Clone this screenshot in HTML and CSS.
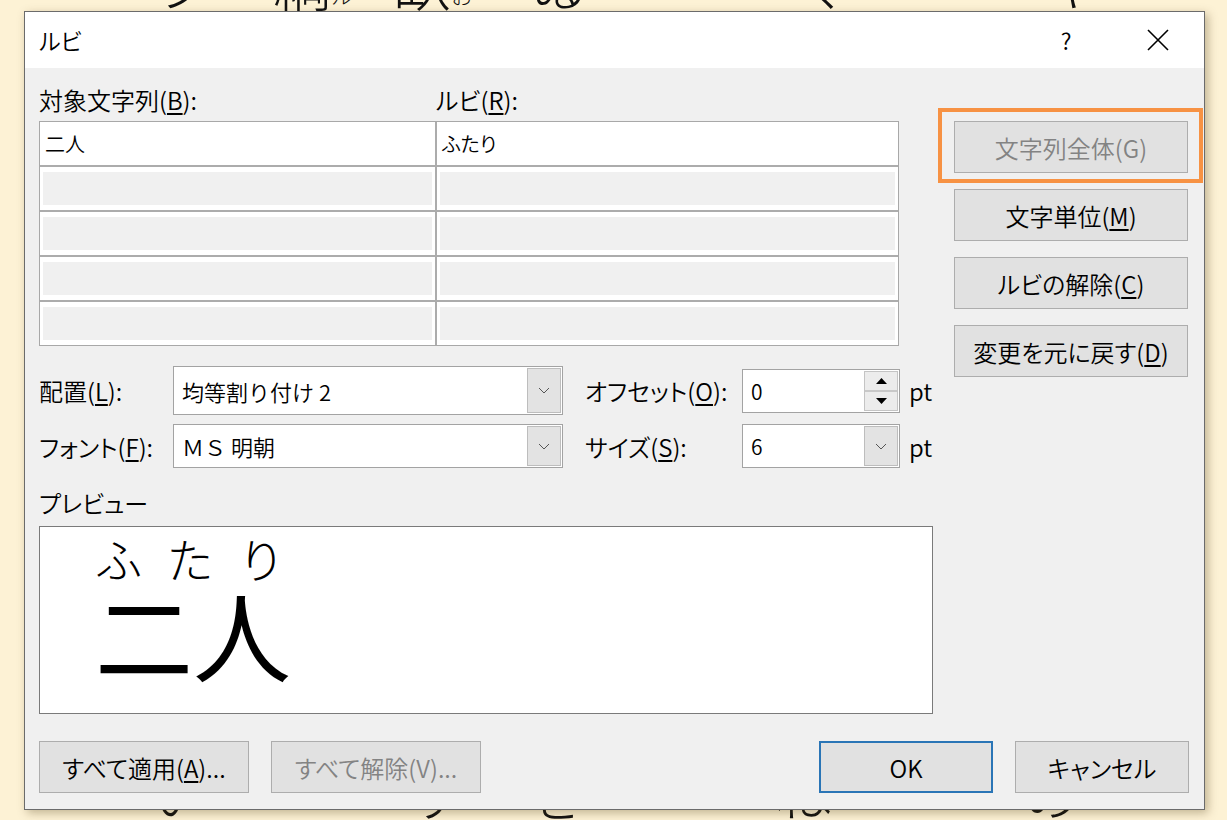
FILE: index.html
```html
<!DOCTYPE html>
<html lang="ja">
<head>
<meta charset="utf-8">
<title>ルビ</title>
<link rel="stylesheet" href="styles.css">
</head>
<body>
<div class="doc">
  <div class="doc-line doc-top">
    <span class="g g1">ラ</span><span class="g g2">綱<small>ル</small></span><span class="g g3">臥<small>お</small></span><span class="g g4">ゐ</span><span class="g g5">ヽ</span><span class="g g6">く</span><span class="g g7">キ</span>
  </div>
  <div class="doc-line doc-bottom">
    <span class="g b1">い</span><span class="g b2">す</span><span class="g b3">を</span><span class="g b4">ね</span><span class="g b5">の</span>
  </div>
</div>

<div class="dialog">
  <div class="titlebar">
    <span class="title">ルビ</span>
    <span class="tb-btn help">?</span>
    <span class="tb-btn close"><svg width="22" height="22" viewBox="0 0 22 22"><path d="M1 1L21 21M21 1L1 21" stroke="#000" stroke-width="1.6" fill="none"/></svg></span>
  </div>
  <div class="body">
    <div class="main">
      <div class="left">
        <div class="col-labels">
          <span class="lbl-target">対象文字列(<u>B</u>):</span>
          <span class="lbl-ruby">ルビ(<u>R</u>):</span>
        </div>
        <div class="grid">
          <div class="cell filled">二人</div>
          <div class="cell filled">ふたり</div>
          <div class="cell empty"><div class="inner"></div></div>
          <div class="cell empty"><div class="inner"></div></div>
          <div class="cell empty"><div class="inner"></div></div>
          <div class="cell empty"><div class="inner"></div></div>
          <div class="cell empty"><div class="inner"></div></div>
          <div class="cell empty"><div class="inner"></div></div>
          <div class="cell empty"><div class="inner"></div></div>
          <div class="cell empty"><div class="inner"></div></div>
        </div>

        <div class="opt-row row1">
          <span class="opt-label">配置(<u>L</u>):</span>
          <div class="combo wide">
            <span class="val">均等割り付け 2</span>
            <span class="drop"><svg width="12" height="7" viewBox="0 0 12 7"><path d="M1 1L6 6L11 1" stroke="#555" stroke-width="1" fill="none"/></svg></span>
          </div>
          <span class="opt-label2">オフセット(<u>O</u>):</span>
          <div class="spin">
            <span class="val">0</span>
            <span class="spin-btns">
              <span class="sb up"><svg width="11" height="6" viewBox="0 0 11 6"><path d="M0 6L5.5 0L11 6Z" fill="#000"/></svg></span>
              <span class="sb down"><svg width="11" height="6" viewBox="0 0 11 6"><path d="M0 0L5.5 6L11 0Z" fill="#000"/></svg></span>
            </span>
          </div>
          <span class="unit">pt</span>
        </div>

        <div class="opt-row row2">
          <span class="opt-label">フォント(<u>F</u>):</span>
          <div class="combo wide">
            <span class="val">ＭＳ 明朝</span>
            <span class="drop"><svg width="12" height="7" viewBox="0 0 12 7"><path d="M1 1L6 6L11 1" stroke="#555" stroke-width="1" fill="none"/></svg></span>
          </div>
          <span class="opt-label2">サイズ(<u>S</u>):</span>
          <div class="combo narrow">
            <span class="val">6</span>
            <span class="drop"><svg width="12" height="7" viewBox="0 0 12 7"><path d="M1 1L6 6L11 1" stroke="#555" stroke-width="1" fill="none"/></svg></span>
          </div>
          <span class="unit">pt</span>
        </div>

        <div class="preview-label">プレビュー</div>
        <div class="preview">
          <div class="pv-word">
            <div class="pv-ruby"><span>ふ</span><span>た</span><span>り</span></div>
            <div class="pv-base">二人</div>
          </div>
        </div>
      </div>

      <div class="right">
        <div class="btn-wrap">
          <button class="btn disabled">文字列全体(G)</button>
          <span class="focus-ring"></span>
        </div>
        <button class="btn">文字単位(<u>M</u>)</button>
        <button class="btn">ルビの解除(<u>C</u>)</button>
        <button class="btn">変更を元に戻す(<u>D</u>)</button>
      </div>
    </div>

    <div class="bottom">
      <button class="btn b-apply">すべて適用(<u>A</u>)...</button>
      <button class="btn b-clear disabled">すべて解除(V)...</button>
      <span class="spacer"></span>
      <button class="btn b-ok">OK</button>
      <button class="btn b-cancel">キャンセル</button>
    </div>
  </div>
</div>
</body>
</html>
```

FILE: styles.css
```css
* { box-sizing: border-box; }

html, body {
  margin: 0;
  padding: 0;
  width: 1227px;
  height: 820px;
  overflow: hidden;
}

body {
  background: #fdf2d5;
  font-family: "Noto Sans CJK JP", "Noto Sans", sans-serif;
  color: #000;
  position: relative;
}

/* document behind the dialog */
.doc {
  position: relative;
  width: 1227px;
  height: 820px;
}

.doc-line {
  display: flex;
  font-family: "Noto Sans CJK JP", serif;
  font-weight: 300;
  font-size: 58px;
  line-height: 58px;
  height: 58px;
  color: #111;
}

.doc-top { margin-top: -48px; }
.doc-bottom { margin-top: 752px; }

.g small { font-size: 22px; vertical-align: 2px; }

.g1 { margin-left: 150px; }
.g2 { margin-left: 65px; }
.g3 { margin-left: 40px; }
.g4 { margin-left: 58px; }
.g5 { margin-left: 70px; }
.g6 { margin-left: 75px; }
.g7 { margin-left: 190px; }

.b1 { margin-left: 150px; }
.b2 { margin-left: 200px; }
.b3 { margin-left: 60px; }
.b4 { margin-left: 190px; }
.b5 { margin-left: 190px; }

/* dialog */
.dialog {
  position: absolute;
  left: 24px;
  top: 11px;
  width: 1181px;
  height: 799px;
  border: 1px solid #6b6b6b;
  background: #f0f0f0;
  box-shadow: 3px 3px 9px rgba(80, 60, 20, 0.35);
  display: flex;
  flex-direction: column;
  font-size: 24px;
  font-weight: 350;
  font-feature-settings: "palt" 1;
}

.titlebar {
  height: 56px;
  background: #fff;
  display: flex;
  align-items: center;
  flex: none;
}

.title {
  padding-left: 14px;
  font-size: 23px;
  flex: 1;
}

.tb-btn {
  width: 92px;
  height: 56px;
  display: flex;
  align-items: center;
  justify-content: center;
}

.help { font-size: 23px; }

.body {
  flex: 1;
  display: flex;
  flex-direction: column;
  padding: 0 15px 0 14px;
}

.main {
  display: flex;
  gap: 21px;
}

.left {
  width: 894px;
  display: flex;
  flex-direction: column;
}

.col-labels {
  margin-top: 17px;
  height: 30px;
  display: flex;
  align-items: center;
  line-height: 30px;
}

.lbl-target { width: 397px; }

u { text-decoration-thickness: 2px; text-underline-offset: 3px; }

.grid {
  margin-top: 6px;
  width: 860px;
  display: grid;
  grid-template-columns: 395px 461px;
  grid-auto-rows: 43px;
  gap: 2px;
  border: 1px solid #a8a8a8;
  background: #acacac;
}

.cell {
  background: #fff;
}

.cell.filled {
  font-size: 20px;
  display: flex;
  align-items: center;
  padding-left: 5px;
}

.cell.empty {
  padding: 5px 3px 5px 3px;
}

.cell .inner {
  width: 100%;
  height: 100%;
  background: #f0f0f0;
}

.opt-row {
  display: flex;
  align-items: center;
}

.row1 { margin-top: 20px; height: 49px; }
.row2 { margin-top: 9px; height: 44px; }

.opt-label { width: 134px; }
.opt-label2 { width: 157px; margin-left: 22px; }

.combo, .spin {
  height: 100%;
  border: 1px solid #a3a3a3;
  background: #fff;
  display: flex;
  align-items: center;
}

.combo.wide { width: 390px; }
.combo.narrow { width: 158px; height: 44px; }
.spin { width: 158px; height: 44px; }

.val {
  flex: 1;
  padding-left: 8px;
  font-size: 21px;
}

.combo.wide .val { font-size: 22px; font-feature-settings: normal; }

.drop {
  width: 34px;
  align-self: stretch;
  margin: 1px;
  background: #e3e3e3;
  border: 1px solid #bdbdbd;
  display: flex;
  align-items: center;
  justify-content: center;
}

.spin-btns {
  width: 34px;
  align-self: stretch;
  margin: 1px;
  display: flex;
  flex-direction: column;
  border: 1px solid #c4c4c4;
}

.sb {
  flex: 1;
  background: #ececec;
  display: flex;
  align-items: center;
  justify-content: center;
}

.sb.up { border-bottom: 2px solid #c8c8c8; }

.unit { margin-left: 9px; font-size: 24px; }

.preview-label {
  margin-top: 20px;
  height: 30px;
  line-height: 30px;
}

.preview {
  margin-top: 8px;
  height: 188px;
  background: #fff;
  border: 1px solid #7a7a7a;
  padding: 6px 0 0 55px;
  font-feature-settings: normal;
  font-weight: 400;
}

.pv-word {
  width: 196px;
  display: flex;
  flex-direction: column;
}

.pv-ruby {
  display: flex;
  justify-content: space-between;
  padding: 0 6px 0 0;
  font-size: 47px;
  line-height: 50px;
  font-weight: 300;
}

.pv-base {
  margin-top: 0;
  font-size: 98px;
  line-height: 98px;
}

.right {
  width: 234px;
  padding-top: 53px;
  display: flex;
  flex-direction: column;
  gap: 16px;
}

.btn {
  font-family: "Noto Sans CJK JP", "Noto Sans", sans-serif;
  font-feature-settings: "palt" 1;
  font-size: 24px;
  font-weight: 350;
  color: #000;
  background: #e1e1e1;
  border: 1px solid #adadad;
  height: 52px;
  width: 234px;
  padding: 0;
  display: flex;
  align-items: center;
  justify-content: center;
}

.btn.disabled { color: #838383; }

.btn-wrap {
  position: relative;
  width: 234px;
  height: 52px;
}

.focus-ring {
  position: absolute;
  left: -16px;
  right: -15px;
  top: -13px;
  bottom: -10px;
  border: 4px solid #f79243;
  pointer-events: none;
}

.bottom {
  margin-top: 27px;
  display: flex;
}

.b-apply, .b-clear { width: 210px; }
.b-clear { margin-left: 22px; }
.spacer { flex: 1; }
.b-ok, .b-cancel { width: 174px; }
.b-ok { border: 2px solid #2a75b6; }
.b-cancel { margin-left: 22px; }
```
